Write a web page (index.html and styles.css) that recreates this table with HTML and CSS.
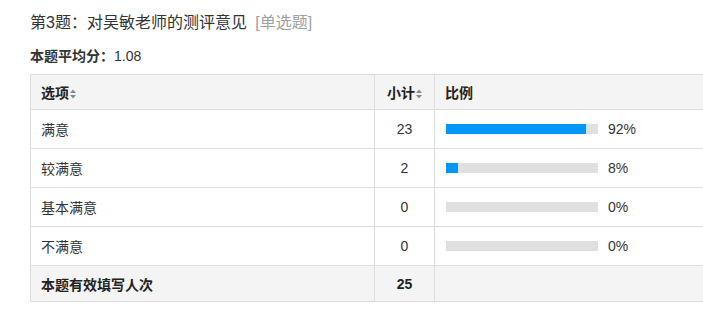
FILE: index.html
```html
<!DOCTYPE html>
<html lang="zh-CN">
<head>
<meta charset="utf-8">
<link rel="stylesheet" href="styles.css">
</head>
<body>
<div class="page">
  <div class="title">第3题：对吴敏老师的测评意见 <span class="type">[单选题]</span></div>
  <div class="avg"><b>本题平均分：</b>1.08</div>
  <table class="grid">
    <thead>
      <tr>
        <th class="c1">选项<svg class="sort" width="6" height="10" viewBox="0 0 6 10"><path d="M0 4L3 0.5L6 4Z M0 6L3 9.5L6 6Z" fill="#888"/></svg></th>
        <th class="c2">小计<svg class="sort" width="6" height="10" viewBox="0 0 6 10"><path d="M0 4L3 0.5L6 4Z M0 6L3 9.5L6 6Z" fill="#888"/></svg></th>
        <th class="c3">比例</th>
      </tr>
    </thead>
    <tbody>
      <tr><td class="c1">满意</td><td class="c2">23</td><td class="c3"><div class="ratio"><div class="bar"><div class="fill" style="width:92%"></div></div><span class="pct">92%</span></div></td></tr>
      <tr><td class="c1">较满意</td><td class="c2">2</td><td class="c3"><div class="ratio"><div class="bar"><div class="fill" style="width:8%"></div></div><span class="pct">8%</span></div></td></tr>
      <tr><td class="c1">基本满意</td><td class="c2">0</td><td class="c3"><div class="ratio"><div class="bar"><div class="fill" style="width:0%"></div></div><span class="pct">0%</span></div></td></tr>
      <tr><td class="c1">不满意</td><td class="c2">0</td><td class="c3"><div class="ratio"><div class="bar"><div class="fill" style="width:0%"></div></div><span class="pct">0%</span></div></td></tr>
    </tbody>
    <tfoot>
      <tr><td class="c1">本题有效填写人次</td><td class="c2">25</td><td class="c3"></td></tr>
    </tfoot>
  </table>
</div>
</body>
</html>
```
FILE: styles.css
```css
html, body {
  margin: 0;
  padding: 0;
  background: #fff;
  overflow: hidden;
}
body {
  font-family: "Liberation Sans", "Noto Sans CJK SC", sans-serif;
  color: #333;
}
.page {
  padding: 12px 0 0 30px;
  width: 720px;
}
.title {
  font-size: 16px;
  line-height: 22px;
  color: #333;
}
.type {
  color: #a0a0a0;
  margin-left: 4px;
}
.avg {
  margin-top: 12px;
  font-size: 14px;
  line-height: 20px;
  color: #333;
}
.avg b {
  font-weight: bold;
}
.grid {
  margin-top: 8px;
  border-collapse: collapse;
  width: 690px;
  font-size: 14px;
}
.grid th, .grid td {
  border: 1px solid #ddd;
  padding: 0 10px;
  text-align: left;
}
.grid thead th {
  background: #f4f4f4;
  height: 34px;
  font-weight: bold;
  color: #222;
}
.grid tbody td {
  height: 38px;
}
.grid tfoot td {
  background: #f4f4f4;
  height: 35px;
  font-weight: bold;
  color: #222;
}
.grid .c1 {
  width: 323px;
}
.grid .c2 {
  width: 39px;
  text-align: center;
}
.sort {
  margin-left: 1px;
  vertical-align: -1px;
}
.ratio {
  display: flex;
  align-items: center;
  padding-left: 1px;
}
.bar {
  width: 152px;
  height: 10px;
  background: #e0e0e0;
}
.fill {
  height: 100%;
  background: #0096fb;
}
.pct {
  margin-left: 10px;
}
```
